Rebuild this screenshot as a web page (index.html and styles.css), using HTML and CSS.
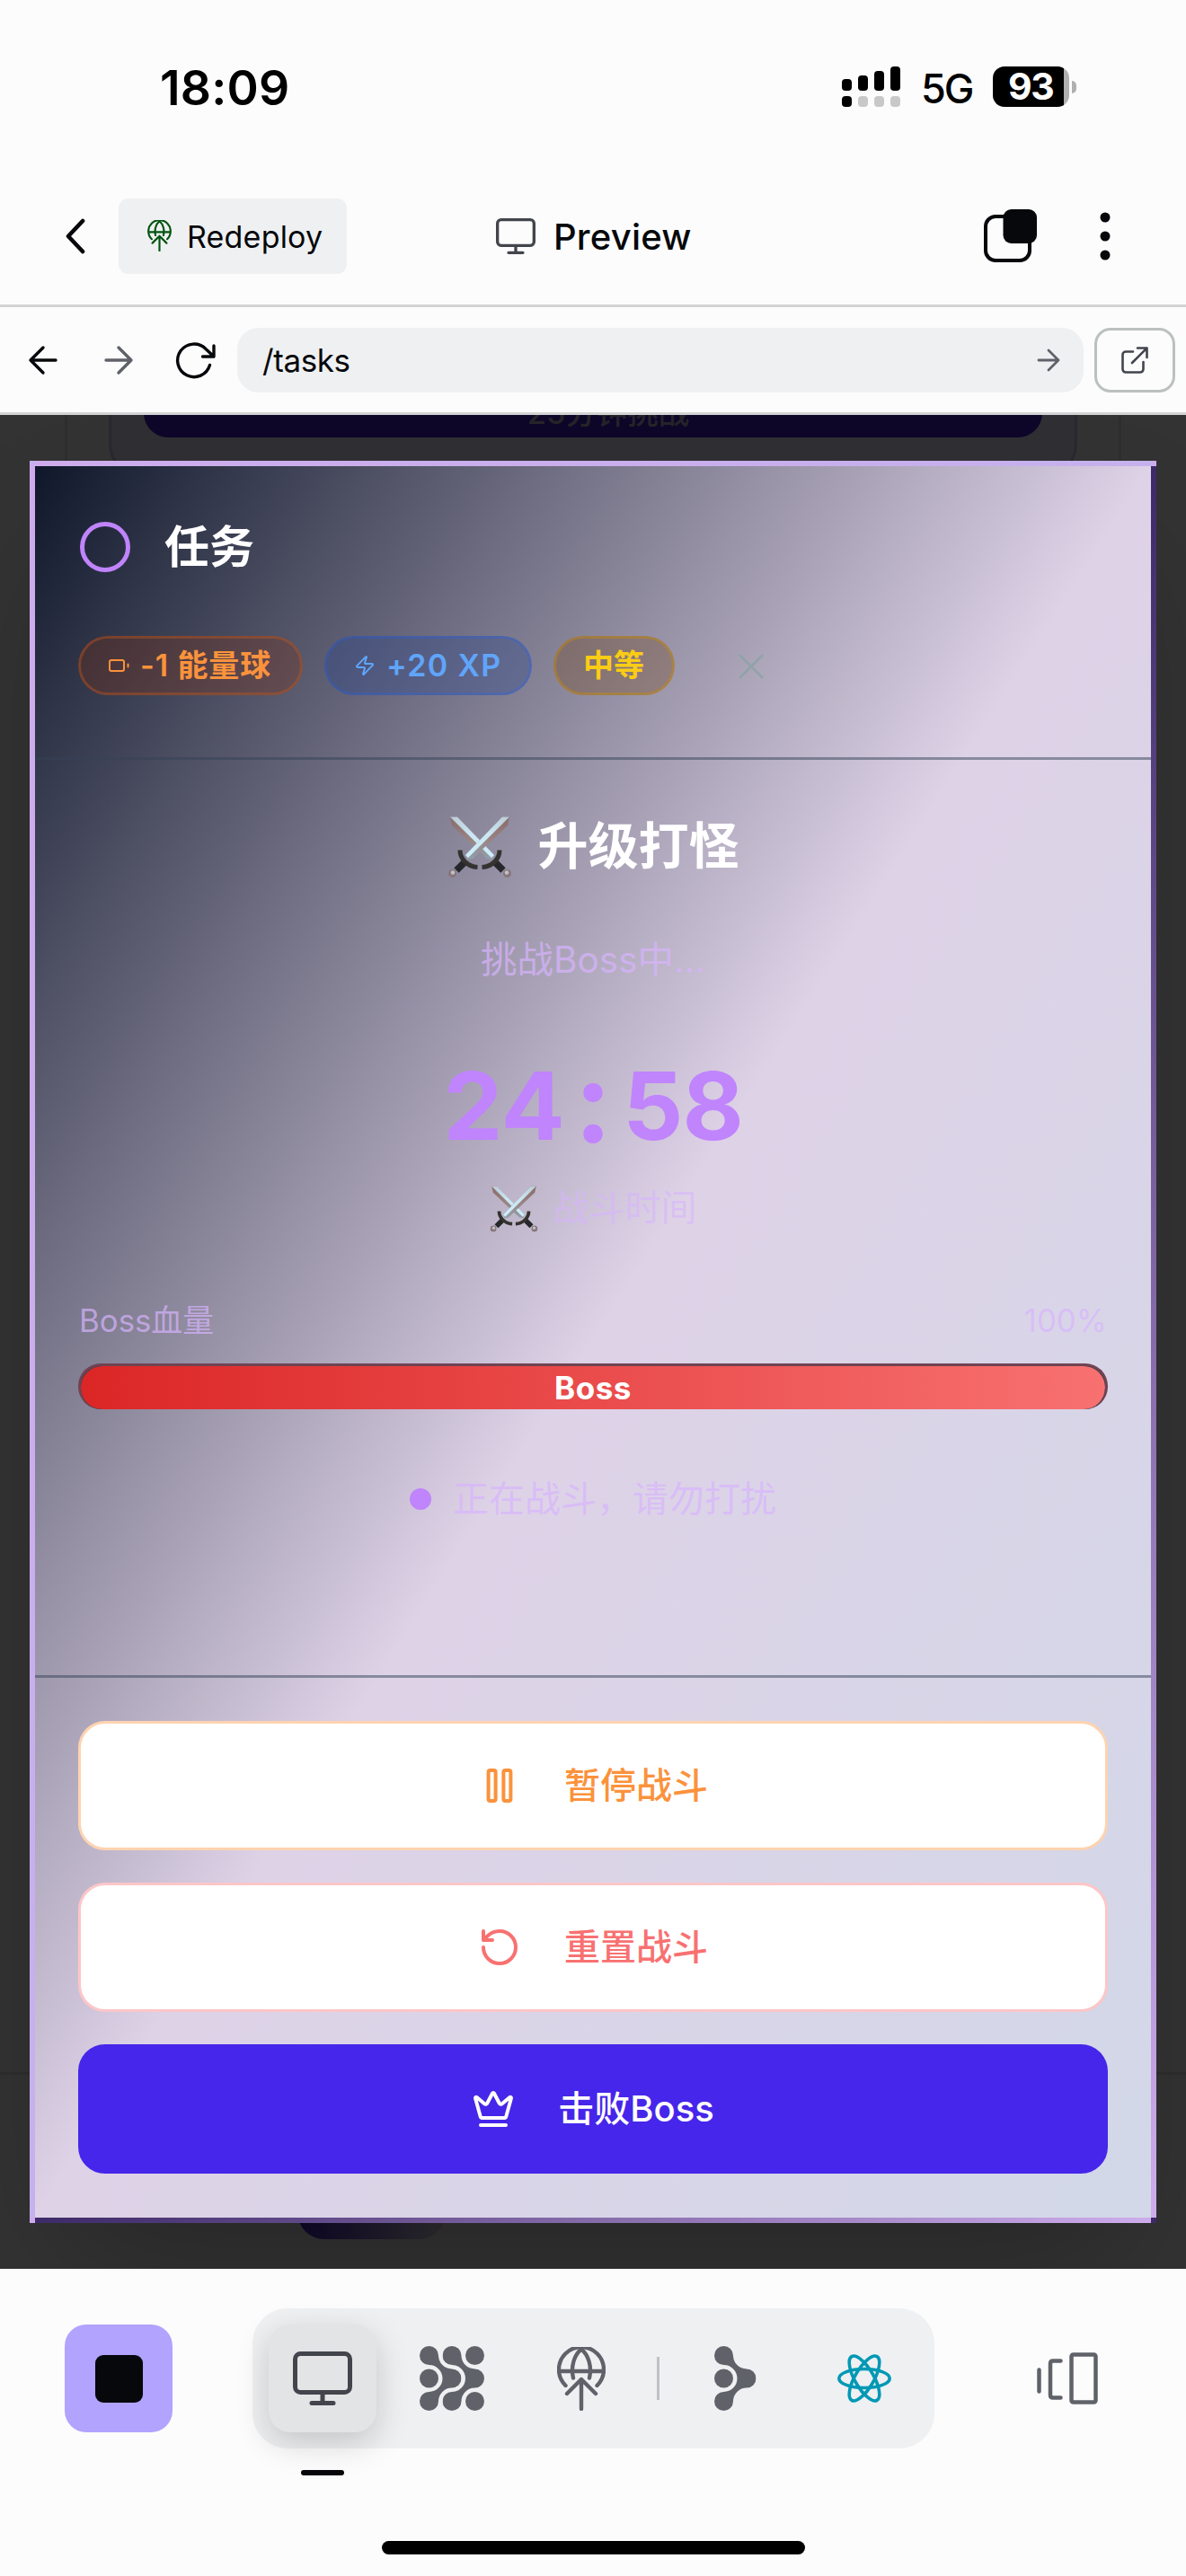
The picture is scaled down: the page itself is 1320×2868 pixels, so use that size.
FILE: index.html
```html
<!DOCTYPE html>
<html lang="zh-CN">
<head>
<meta charset="utf-8">
<title>Preview</title>
<link rel="stylesheet" href="styles.css">
</head>
<body>
<svg class="defs" width="0" height="0" aria-hidden="true">
  <defs>
    <linearGradient id="blade" x1="0" y1="0" x2="1" y2="1">
      <stop offset="0" stop-color="#b9cbd6"/><stop offset=".45" stop-color="#cbe7f3"/><stop offset="1" stop-color="#cdeefa"/>
    </linearGradient>
    <linearGradient id="edge" x1="0" y1="0" x2="1" y2="1">
      <stop offset="0" stop-color="#8a6c69"/><stop offset=".5" stop-color="#9a8483"/><stop offset="1" stop-color="#8fa3ae"/>
    </linearGradient>
    <symbol id="sword" viewBox="0 0 72 72">
      <path d="M3 3.500L11 3.500L52 46L50 51L44 50L5 13Z" fill="url(#edge)"/>
      <path d="M3 3.500L11 3.500L52 46L49 49Z" fill="url(#blade)"/>
      <path d="M52 53L62 63" stroke="#25272b" stroke-width="7.500"/>
      <path d="M58 40.500C58 50 50 59 38.500 59.500" fill="none" stroke="#353330" stroke-width="5"/>
      <circle cx="66.500" cy="66.500" r="4.500" fill="#85777b"/><circle cx="66" cy="65.500" r="2.200" fill="#c6c0c4"/>
    </symbol>
    <symbol id="swords" viewBox="0 0 72 72">
      <use href="#sword" width="72" height="72"/>
      <g transform="translate(72 0) scale(-1 1)"><use href="#sword" width="72" height="72"/></g>
    </symbol>
    <symbol id="monitor" viewBox="0 0 66 60">
      <rect x="2.500" y="2.500" width="61" height="43" rx="6" fill="none" stroke="currentColor" stroke-width="5"/>
      <path d="M33 46v12M21 57.500h24" fill="none" stroke="currentColor" stroke-width="5" stroke-linecap="round"/>
    </symbol>
    <symbol id="globe" viewBox="0 0 54 71">
      <g fill="none" stroke="currentColor" stroke-width="4.400" stroke-linecap="round">
        <path d="M9.500 43A25 25 0 1 1 44.500 43M2.500 27h49"/>
        <path d="M18 34.500C15 22 19 9 27 2.500C35 9 39 22 36 34.500"/>
        <path d="M27 69V36M11 52L27 36L43 52" stroke-linejoin="round"/>
      </g>
    </symbol>
    <symbol id="branch" viewBox="-10.500 -10.500 46.500 72">
      <path d="M0-10.500A10.500 10.500 0 0 1 10.500 0A15 15 0 0 0 25.500 15A10.500 10.500 0 0 1 25.500 36A15 15 0 0 0 10.500 51A10.500 10.500 0 1 1 0 40.500A15 15 0 0 0 0 10.500A10.500 10.500 0 0 1 0-10.500Z" fill="currentColor"/>
    </symbol>
  </defs>
</svg>

<header class="status">
  <span class="clock">18:09</span>
  <div class="status-right">
    <svg class="signal" viewBox="0 0 65 45" width="65" height="45">
      <g fill="#000"><rect y="14" width="11" height="13" rx="4"/><rect x="18" y="10" width="11" height="17" rx="4"/><rect x="36" y="5" width="11" height="22" rx="4"/><rect x="54" width="11" height="27" rx="4"/><rect y="33" width="11" height="12" rx="4"/></g>
      <g fill="#c8c8c8"><rect x="18" y="33" width="11" height="12" rx="4"/><rect x="36" y="33" width="11" height="12" rx="4"/><rect x="54" y="33" width="11" height="12" rx="4"/></g>
    </svg>
    <span class="network">5G</span>
    <div class="battery"><span class="level">93</span></div><i class="nub"></i>
  </div>
</header>

<nav class="topbar">
  <svg class="back" viewBox="0 0 22 40" width="22" height="40"><path d="M19 3L3 20L19 37" fill="none" stroke="#06080b" stroke-width="4.600" stroke-linecap="round" stroke-linejoin="round"/></svg>
  <div class="redeploy"><svg width="27" height="35"><use href="#globe" width="27" height="35"/></svg><span>Redeploy</span></div>
  <div class="heading"><svg width="44" height="40"><use href="#monitor" width="44" height="40"/></svg><span>Preview</span></div>
  <svg class="tabs" viewBox="0 0 59 59" width="59" height="59"><rect x="2" y="8" width="49" height="49" rx="11" fill="none" stroke="#06080b" stroke-width="4"/><rect x="21.500" y="0" width="37.500" height="38" rx="9" fill="#06080b"/></svg>
  <svg class="more" viewBox="0 0 12 54" width="12" height="54" fill="#06080b"><circle cx="6" cy="6" r="5.500"/><circle cx="6" cy="27" r="5.500"/><circle cx="6" cy="48" r="5.500"/></svg>
</nav>

<div class="urlbar">
  <svg class="u-back" viewBox="0 0 32 32" width="32" height="32"><path d="M30 16H2M16 2L2 16L16 30" /></svg>
  <svg class="u-fwd" viewBox="0 0 32 32" width="32" height="32"><path d="M2 16H30M16 2L30 16L16 30"/></svg>
  <svg class="u-reload" viewBox="0 0 44 40" width="44" height="40"><path d="M37.500 25.500A18.300 18.300 0 1 1 33 7.500L42 16M42 4V16H29.500"/></svg>
  <div class="address"><span>/tasks</span><svg viewBox="0 0 24 24" width="24" height="24"><path d="M1 12H23M12 1L23 12L12 23"/></svg></div>
  <div class="external"><svg viewBox="0 0 30 30" width="30" height="30"><path d="M13 5.500H5A3.500 3.500 0 0 0 1.500 9V25A3.500 3.500 0 0 0 5 28.500H21A3.500 3.500 0 0 0 24.500 25V17M18 1.500H28.500V12M28.500 1.500L12 18"/></svg></div>
</div>

<main class="preview">
  <div class="page">
    <div class="page-card"><div class="quest"><div class="start">25分钟挑战</div></div></div>
    <div class="page-foot"></div>
    <div class="page-tab"></div>
  </div>

  <section class="modal">
    <div class="modal-head">
      <div class="task"><i class="ring"></i><h1>任务</h1></div>
      <div class="badges">
        <span class="badge orange"><svg viewBox="0 0 24 24" width="24" height="24"><rect x="2" y="6" width="16" height="12" rx="2"/><path d="M22.500 10.500v3"/></svg>-1 能量球</span>
        <span class="badge blue"><svg viewBox="0 0 24 24" width="24" height="24"><path d="M4 14a1 1 0 0 1-.78-1.630l9.900-10.200a.5.5 0 0 1 .86.460l-1.920 6.020A1 1 0 0 0 13 10h7a1 1 0 0 1 .78 1.630l-9.900 10.200a.5.5 0 0 1-.86-.460l1.920-6.020A1 1 0 0 0 11 14z"/></svg>+20 XP</span>
        <span class="badge yellow">中等</span>
        <svg class="close" viewBox="0 0 28 28" width="28" height="28"><path d="M1 1L27 27M27 1L1 27"/></svg>
      </div>
    </div>

    <div class="battle">
      <h2 class="battle-title"><svg width="72" height="72"><use href="#swords" width="72" height="72"/></svg>升级打怪</h2>
      <p class="subtitle">挑战Boss中...</p>
      <div class="timer"><span>2</span><span>4</span><span class="colon">:</span><span>5</span><span>8</span></div>
      <p class="timer-label"><svg width="54" height="54"><use href="#swords" width="54" height="54"/></svg>战斗时间</p>
      <div class="hp-row"><span>Boss血量</span><span>100%</span></div>
      <div class="hp"><div class="hp-fill">Boss</div></div>
      <p class="busy"><i></i>正在战斗，请勿打扰</p>
    </div>

    <div class="actions">
      <button class="btn pause"><svg viewBox="0 0 24 24" width="48" height="48"><rect x="5.800" y="3.500" width="4" height="17" rx="1"/><rect x="14.200" y="3.500" width="4" height="17" rx="1"/></svg>暂停战斗</button>
      <button class="btn reset"><svg viewBox="0 0 24 24" width="48" height="48"><path d="M3 12a9 9 0 1 0 9-9 9.750 9.750 0 0 0-6.740 2.740L3 8M3 3v5h5"/></svg>重置战斗</button>
      <button class="btn win"><svg viewBox="0 0 24 24" width="48" height="48"><path d="M11.562 3.266a.5.5 0 0 1 .876 0L15.390 8.870a1 1 0 0 0 1.516.294L21.183 5.500a.5.5 0 0 1 .798.519l-2.834 10.246a1 1 0 0 1-.956.734H5.810a1 1 0 0 1-.957-.734L2.020 6.020a.5.5 0 0 1 .798-.519l4.276 3.664a1 1 0 0 0 1.516-.294zM5 21h14"/></svg>击败Boss</button>
    </div>
  </section>
</main>

<footer class="dockbar">
  <div class="dock-row">
    <div class="stop"><i></i></div>
    <div class="dock">
      <div class="tool active"><svg width="66" height="60"><use href="#monitor" width="66" height="60"/></svg></div>
      <svg class="lattice" viewBox="-10.500 -10.500 72 72" width="72" height="72" fill="currentColor">
        <use href="#branch" x="-10.500" y="-10.500" width="46.500" height="72"/>
        <use href="#branch" x="15" y="-10.500" width="46.500" height="72"/>
        <circle cx="0" cy="25.500" r="10.500"/><circle cx="51" cy="0" r="10.500"/><circle cx="51" cy="51" r="10.500"/>
      </svg>
      <svg class="publish" width="54" height="71"><use href="#globe" width="54" height="71"/></svg>
      <i class="sep"></i>
      <svg class="flow" viewBox="-10.500 -10.500 46.500 72" width="46.500" height="72" fill="currentColor"><use href="#branch" x="-10.500" y="-10.500" width="46.500" height="72"/><circle cx="0" cy="25.500" r="10.500"/></svg>
      <svg class="react" viewBox="-30 -30 60 60" width="60" height="60" fill="none" stroke="#0099b5" stroke-width="3.600"><ellipse rx="28.200" ry="10.500"/><ellipse rx="28.200" ry="10.500" transform="rotate(60)"/><ellipse rx="28.200" ry="10.500" transform="rotate(120)"/></svg>
    </div>
    <svg class="panels" viewBox="0 0 68 58" width="68" height="58" fill="none" stroke="#5f6269" stroke-width="4.500" stroke-linecap="round" stroke-linejoin="round"><path d="M2.500 19.500V43.500M26.500 9.500H18Q15 9.500 15 12.500V47.500Q15 50.500 18 50.500H26.500"/><rect x="38.500" y="2.500" width="27" height="53" rx="2"/></svg>
  </div>
  <div class="underline"></div>
  <div class="home"></div>
</footer>
</body>
</html>
```
FILE: styles.css
```css
* { box-sizing: border-box; margin: 0; padding: 0; }
body { width: 1320px; height: 2868px; display: flex; flex-direction: column; overflow: hidden; background: #fcfcfc; color: #06080b; font-family: Inter, "Noto Sans CJK SC", sans-serif; }
svg { display: block; flex: none; overflow: visible; }
.defs { position: absolute; }

/* status bar */
.status { height: 186px; padding: 68px 122px 0 178px; display: flex; justify-content: space-between; align-items: flex-start; color: #000; }
.clock { font-size: 53.500px; line-height: 60px; font-weight: 600; letter-spacing: .2px; }
.status-right { display: flex; align-items: center; padding-top: 6px; height: 51px; }
.network { font-size: 45px; line-height: 45px; width: 56px; margin: 4px 0 0 23px; font-weight: 500; letter-spacing: -2px; }
.battery { margin-left: 24px; width: 85px; height: 45px; border-radius: 13px; background: linear-gradient(90deg, #000 79px, #b0b0b0 79px); }
.level { display: block; padding-left: 17px; color: #fff; font-size: 41px; line-height: 45px; font-weight: 700; letter-spacing: -1.500px; }
.nub { width: 5px; height: 14px; margin-left: 3px; border-radius: 0 5px 5px 0; background: #b0b0b0; }

/* app header */
.topbar { height: 156px; display: flex; align-items: flex-start; border-bottom: 3px solid #d3d3d4; padding: 35px 84px 0 73px; }
.back { margin-top: 22px; }
.redeploy { margin-left: 37px; width: 254px; height: 84px; border-radius: 11px; background: #eff0f2; display: flex; align-items: center; gap: 17px; padding-left: 32px; font-size: 34px; letter-spacing: .2px; }
.redeploy svg { color: #035410; margin-top: -1px; }
.heading { margin-left: 166px; width: 220px; height: 84px; display: flex; align-items: center; gap: 20px; font-size: 40px; font-weight: 500; letter-spacing: .2px; }
.heading svg { color: #42454c; }
.tabs { margin: 12px 0 0 323px; }
.more { margin: 15px 0 0 70px; }

/* address row */
.urlbar { height: 120px; display: flex; align-items: center; border-bottom: 3px solid #d3d3d4; padding: 0 12px 0 32px; }
.urlbar path { fill: none; stroke: #06080b; stroke-width: 3.400px; stroke-linecap: round; stroke-linejoin: round; }
.u-fwd { margin-left: 52px; }
.urlbar .u-fwd path { stroke: #5f6269; }
.u-reload { margin-left: 48px; }
.address { margin-left: 24px; width: 942px; height: 72px; border-radius: 24px; background: #eff0f2; display: flex; align-items: center; justify-content: space-between; padding: 0 27px 0 28px; font-size: 35px; letter-spacing: -.4px; }
.urlbar .address path { stroke: #5f6269; stroke-width: 2.800px; }
.external { margin-left: 12px; width: 90px; height: 72px; border: 3px solid #bcc0c0; border-radius: 18px; display: flex; align-items: center; justify-content: center; }
.urlbar .external path { stroke: #42454c; stroke-width: 2.600px; }

/* dimmed page under the dialog */
.preview { position: relative; height: 2064px; overflow: hidden; background: #333; }
.page { height: 2064px; display: flex; flex-direction: column; }
.page-card { height: 1845px; margin: 0 72px; border: solid #2e2e2e; border-width: 0 3px; }
.quest { height: 134px; margin: -65px 46px 0; border: 3px solid #2a2830; border-top: 0; border-radius: 0 0 36px 36px; background: #302f33; padding: 0 36px; }
.start { height: 90px; border-radius: 27px; background: #0e0729; color: #272429; font-size: 34.500px; line-height: 60px; padding: 33px 0 0 34px; text-align: center; font-weight: 500; }
.page-foot { height: 186px; border-top: 3px solid #2e2e2e; }
.page-tab { width: 165px; height: 60px; margin: -60px 0 0 331px; border-radius: 32px; background: linear-gradient(90deg, #0e0729, #2d2b31 92%); }

/* dialog */
.modal { position: absolute; left: 33px; top: 51px; width: 1254px; height: 1962px; display: flex; flex-direction: column; border: 6px solid rgba(168, 85, 247, .3); background: linear-gradient(to bottom right, #0f172a, #ded2e7 50%, #d2d8e8); box-shadow: 0 75px 150px -36px rgba(0, 0, 0, .25); }
.modal-head { height: 327px; padding: 60px 48px 0; border-bottom: 3px solid rgba(51, 65, 85, .5); }
.task { height: 60px; display: flex; align-items: center; gap: 38px; padding-left: 2px; }
.ring { width: 56px; height: 56px; border: 5px solid #c084fc; border-radius: 50%; }
h1 { font-size: 50px; line-height: 60px; color: #fff; font-weight: 700; }
.badges { margin-top: 69px; display: flex; align-items: center; gap: 24px; }
.badge { height: 66px; border: 3px solid; border-radius: 33px; display: flex; align-items: center; padding: 0 30px; gap: 12px; font-size: 34px; font-weight: 600; line-height: 60px; white-space: nowrap; letter-spacing: .9px; }
.badge svg { fill: none; stroke: currentColor; stroke-width: 2px; stroke-linecap: round; stroke-linejoin: round; }
.orange { width: 250px; color: #fb923c; background: rgba(124, 45, 18, .3); border-color: rgba(194, 85, 32, .42); }
.blue { width: 231px; color: #60a5fa; background: rgba(30, 58, 138, .3); border-color: rgba(37, 99, 235, .3); letter-spacing: 1.300px; }
.yellow { width: 135px; color: #facc15; background: rgba(113, 63, 18, .3); border-color: rgba(202, 138, 4, .42); letter-spacing: 0; }
.close { margin-left: 47px; margin-top: 1px; fill: none; stroke: #8aa3a5; stroke-width: 2.500px; opacity: .8; }

.battle { height: 1022px; padding: 60px 48px 0; border-bottom: 3px solid rgba(51, 65, 85, .5); color: #d8b4fe; }
.battle p { display: flex; align-items: center; justify-content: center; height: 60px; line-height: 60px; font-size: 40px; }
.battle-title { height: 72px; display: flex; align-items: center; justify-content: center; gap: 29px; color: #fff; font-size: 56px; line-height: 72px; font-weight: 700; }
.battle .subtitle { margin-top: 61px; font-size: 40.500px; opacity: .7; }
.timer { margin-top: 78px; height: 108px; display: flex; justify-content: center; color: #c084fc; font-size: 105px; line-height: 108px; font-weight: 700; }
.timer span { width: 66.800px; display: flex; justify-content: center; }
.timer .colon { font-size: 126px; line-height: 98px; }
.battle .timer-label { margin-top: 30px; gap: 17px; color: rgba(216, 180, 254, .6); }
.hp-row { margin-top: 68px; height: 54px; line-height: 54px; font-size: 34.800px; display: flex; justify-content: space-between; padding: 0 1px; color: rgba(216, 180, 254, .7); }
.hp { margin-top: 21px; height: 51px; border: solid #704352; border-width: 3px 3px 0; border-radius: 25px; background: #344054; overflow: hidden; }
.hp-fill { height: 48px; border-radius: 24px; background: linear-gradient(90deg, #dc2626, #f87171); color: #fff; font-size: 35px; line-height: 48px; font-weight: 700; text-align: center; letter-spacing: .5px; }
.battle .busy { margin-top: 70px; gap: 24px; color: rgba(216, 180, 254, .7); }
.busy i { width: 24px; height: 24px; border-radius: 50%; background: #c084fc; }

.actions { padding: 48px 48px 0; display: flex; flex-direction: column; gap: 36px; }
.btn { height: 144px; border: 3px solid; border-radius: 30px; background: #fff; display: flex; align-items: center; justify-content: center; gap: 48px; font: 500 40px/60px Inter, "Noto Sans CJK SC", sans-serif; }
.btn svg { fill: none; stroke: currentColor; stroke-width: 2px; stroke-linecap: round; stroke-linejoin: round; }
.pause { color: #fb923c; border-color: #fdd3b1; }
.reset { color: #f87171; border-color: #fcc6c8; }
.win { color: #fff; background: #4626ea; border-color: #4626ea; }

/* bottom toolbar */
.dockbar { height: 342px; padding-top: 44px; color: #5f6269; }
.dock-row { height: 156px; display: flex; align-items: center; padding-left: 72px; }
.stop { width: 120px; height: 120px; border-radius: 24px; background: #b1a3fe; display: flex; align-items: center; justify-content: center; }
.stop i { width: 53px; height: 53px; border-radius: 9px; background: #06080b; }
.dock { margin-left: 89px; width: 759px; height: 156px; border-radius: 39px; background: #eff0f2; display: flex; align-items: center; padding-left: 18px; }
.tool { width: 120px; height: 120px; border-radius: 24px; background: #e3e4e6; color: #42454c; display: flex; align-items: center; justify-content: center; box-shadow: 0 12px 36px rgba(0, 0, 0, .18); }
.lattice { margin-left: 48px; }
.publish { margin-left: 81px; }
.sep { width: 3px; height: 48px; margin-left: 57px; background: #bfc1c4; }
.flow { margin-left: 61px; }
.react { margin-left: 90px; }
.panels { margin-left: 114px; }
.underline { width: 48px; height: 6px; margin: 24px 0 0 335px; border-radius: 3px; background: #06080b; }
.home { width: 471px; height: 15px; margin: 73px 0 0 425px; border-radius: 8px; background: #000; }
```
